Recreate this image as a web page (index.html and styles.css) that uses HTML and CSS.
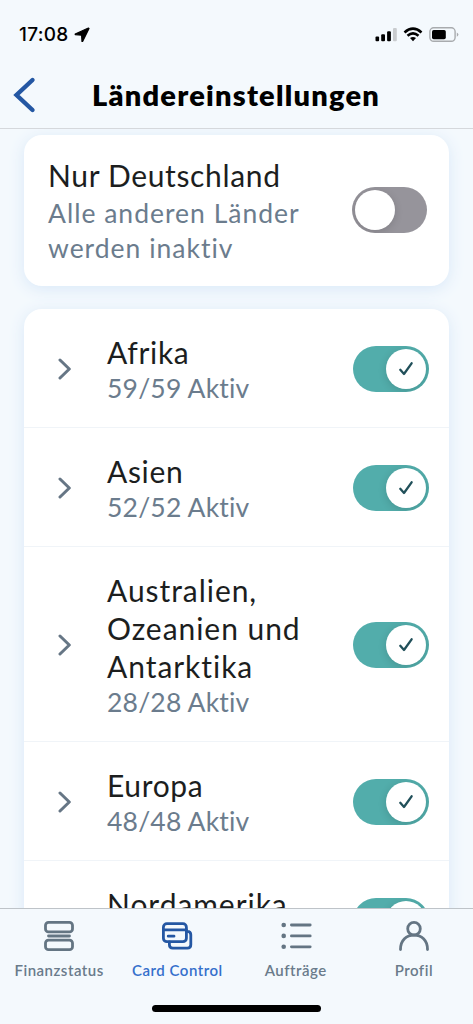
FILE: index.html
```html
<!DOCTYPE html>
<html lang="de">
<head>
<meta charset="utf-8">
<title>Ländereinstellungen</title>
<link rel="stylesheet" href="styles.css">
</head>
<body>
<div class="app">
  <header class="header">
    <div class="status">
      <div class="status-left">
        <span class="time">17:08</span>
        <svg class="loc" width="16" height="16" viewBox="0 0 16 16"><path d="M14.4 1 L1.2 7 L1.2 7.6 L7.6 8.2 L8 14.5 L8.6 14.5 L15 1.4Z" fill="#000" stroke="#000" stroke-width="1.2" stroke-linejoin="round"/></svg>
      </div>
      <svg class="status-icons" width="84" height="18" viewBox="0 0 84 18">
        <rect x=".5" y="10.5" width="3.6" height="4.7" rx="1"/>
        <rect x="6.2" y="8.2" width="3.8" height="7" rx="1"/>
        <rect x="12.1" y="5.2" width="3.8" height="10" rx="1"/>
        <rect x="18" y="2" width="3.8" height="13.2" rx="1" fill="#c9cccf"/>
        <g fill="none" stroke="#000" stroke-width="2.6">
          <path d="M29.5 6.5 Q38 -1.1 46.5 6.5"/>
          <path d="M32.5 9.8 Q38 5 43.5 9.8"/>
        </g>
        <path d="M35 12.1 Q38 9.8 41 12.1 L38 15.3Z"/>
        <rect x="54.9" y="1.8" width="25.2" height="13.5" rx="3.8" fill="none" stroke="#a8abae" stroke-width="1.4"/>
        <rect x="57" y="4" width="13.8" height="9.2" rx="1.7"/>
        <path d="M81.8 6.5 Q83.4 7.3 83.4 8.6 Q83.4 9.9 81.8 10.7Z" fill="#a8abae"/>
      </svg>
    </div>
    <div class="titlebar">
      <svg class="back" width="24" height="38" viewBox="0 0 24 38"><path d="M20.5 4 L4.5 19 L20.5 34" fill="none" stroke="#2457a3" stroke-width="4.4" stroke-linecap="round"/></svg>
      <h1 class="title">Ländereinstellungen</h1>
    </div>
  </header>

  <main class="content">
    <section class="card only">
      <div class="text">
        <div class="name">Nur Deutschland</div>
        <div class="sub note">Alle anderen Länder<br>werden inaktiv</div>
      </div>
      <div class="toggle"><span class="knob"></span></div>
    </section>

    <section class="card list">
      <div class="row">
        <svg class="chev" width="14" height="22" viewBox="0 0 14 22"><path d="M2 2 L11.3 11 L2 20"/></svg>
        <div class="text"><div class="name">Afrika</div><div class="sub">59/59 Aktiv</div></div>
        <div class="toggle on"><span class="knob"><svg width="14" height="14" viewBox="0 0 14 14"><path d="M1.3 7.8 L5 12 L12.6 1.3"/></svg></span></div>
      </div>
      <div class="row">
        <svg class="chev" width="14" height="22" viewBox="0 0 14 22"><path d="M2 2 L11.3 11 L2 20"/></svg>
        <div class="text"><div class="name">Asien</div><div class="sub">52/52 Aktiv</div></div>
        <div class="toggle on"><span class="knob"><svg width="14" height="14" viewBox="0 0 14 14"><path d="M1.3 7.8 L5 12 L12.6 1.3"/></svg></span></div>
      </div>
      <div class="row">
        <svg class="chev" width="14" height="22" viewBox="0 0 14 22"><path d="M2 2 L11.3 11 L2 20"/></svg>
        <div class="text"><div class="name wide">Australien,<br>Ozeanien und<br>Antarktika</div><div class="sub">28/28 Aktiv</div></div>
        <div class="toggle on"><span class="knob"><svg width="14" height="14" viewBox="0 0 14 14"><path d="M1.3 7.8 L5 12 L12.6 1.3"/></svg></span></div>
      </div>
      <div class="row">
        <svg class="chev" width="14" height="22" viewBox="0 0 14 22"><path d="M2 2 L11.3 11 L2 20"/></svg>
        <div class="text"><div class="name">Europa</div><div class="sub">48/48 Aktiv</div></div>
        <div class="toggle on"><span class="knob"><svg width="14" height="14" viewBox="0 0 14 14"><path d="M1.3 7.8 L5 12 L12.6 1.3"/></svg></span></div>
      </div>
      <div class="row last">
        <div class="chev"></div>
        <div class="text"><div class="name wide">Nordamerika</div></div>
        <div class="toggle on"><span class="knob"></span></div>
      </div>
    </section>
  </main>

  <nav class="tabs">
    <div class="tab">
      <svg width="32" height="32" viewBox="0 0 32 32"><rect x="2.5" y="2.3" width="27" height="9.6" rx="3"/><path d="M5.5 16 H26.5"/><rect x="2.5" y="20.1" width="27" height="9.6" rx="3"/></svg>
      <span>Finanzstatus</span>
    </div>
    <div class="tab active">
      <svg width="32" height="32" viewBox="0 0 32 32"><rect x="2.4" y="3.7" width="23" height="18" rx="3.5"/><path d="M2.4 9.8 H25.4 M7.2 16.2 H13 M8.4 22 V24.8 Q8.4 28.2 11.8 28.2 H26.4 Q29.8 28.2 29.8 24.8 V14.8 Q29.8 11.4 26.2 11.4"/></svg>
      <span>Card Control</span>
    </div>
    <div class="tab">
      <svg width="32" height="32" viewBox="0 0 32 32"><path d="M11.4 5 H30.2 M11.4 15.9 H30.2 M11.4 26.8 H30.2"/><g class="dots"><circle cx="3.7" cy="5" r="2.3"/><circle cx="3.7" cy="15.9" r="2.3"/><circle cx="3.7" cy="26.8" r="2.3"/></g></svg>
      <span>Aufträge</span>
    </div>
    <div class="tab">
      <svg width="32" height="32" viewBox="0 0 32 32"><circle cx="16" cy="8.7" r="6.3"/><path d="M2.5 29.5 C2.5 20 8.5 15.2 16 15.2 S29.5 20 29.5 29.5"/></svg>
      <span>Profil</span>
    </div>
  </nav>
  <div class="home"><span class="home-bar"></span></div>
</div>
</body>
</html>
```
FILE: styles.css
```css
* { box-sizing: border-box; }
body { margin: 0; font-family: Lato, sans-serif; font-variant-ligatures: none; }
.app { width: 473px; height: 1024px; display: flex; flex-direction: column; overflow: hidden; background: #f4f9fd; }

.header { height: 129px; flex: none; border-bottom: 1px solid #d5d8dc; }
.status { height: 69px; display: flex; align-items: flex-start; justify-content: space-between; padding: 24px 14px 0 19px; }
.status-left { display: flex; gap: 5px; }
.time { font: 500 19px/22px Inter, sans-serif; letter-spacing: .3px; }
.loc { margin-top: 3px; }
.status-icons { margin-top: 2px; }
.titlebar { height: 50px; display: flex; align-items: center; padding-left: 12px; }
.back { flex: none; margin-top: 1px; }
.title { margin: 1px 0 0 56px; font-size: 29px; line-height: 40px; font-weight: 800; letter-spacing: 1.22px; white-space: nowrap; }

.content { flex: 1; min-height: 0; overflow: hidden; padding: 5.5px 24px 0 24px; display: flex; flex-direction: column; gap: 23.5px; }
.card { flex: none; background: #fff; border-radius: 18px; box-shadow: 0 3px 16px #d9e8f8; }
.only { height: 151px; display: flex; align-items: center; justify-content: space-between; padding: 0 22px 0 24px; }
.name { font-size: 30px; line-height: 38px; color: #1c1e1e; letter-spacing: .65px; white-space: nowrap; }
.name.wide { letter-spacing: .95px; }
.sub { font-size: 26.5px; line-height: 35px; color: #6b7c8d; letter-spacing: .2px; white-space: nowrap; }
.sub.note { margin-top: 2px; letter-spacing: 1px; }
.only .text { margin-top: 1px; }

.row { display: flex; align-items: center; padding: 23.5px 20px 21.5px 34px; border-bottom: 1.5px solid #f0f4f8; }
.row .text { flex: 1; margin-left: 35px; }
.row.last { padding-bottom: 58px; align-items: flex-start; }
.row.last .toggle { margin-top: 13.5px; }
.chev { width: 14px; flex: none; fill: none; stroke: #667685; stroke-width: 3; stroke-linecap: round; stroke-linejoin: round; }

.toggle { width: 75px; height: 46px; flex: none; border-radius: 23px; background: #96949b; display: flex; align-items: center; padding: 0 3px; overflow: hidden; }
.toggle.on { width: 76px; background: #52adab; justify-content: flex-end; }
.knob { width: 40px; height: 40px; border-radius: 50%; background: #fff; display: flex; align-items: center; justify-content: center; box-shadow: 0 2px 8px rgba(0,0,0,.14); }
.knob svg { fill: none; stroke: #21505a; stroke-width: 2.3; stroke-linecap: round; stroke-linejoin: round; }

.tabs { height: 80px; flex: none; border-top: 1px solid #bec3c8; display: grid; grid-template-columns: repeat(4, 1fr); padding-top: 11px; background: #f4f9fd; z-index: 1; }
.tab { display: flex; flex-direction: column; align-items: center; gap: 8px; color: #6a7b8b; font-size: 15px; line-height: 20px; font-weight: 600; letter-spacing: .5px; white-space: nowrap; }
.tab svg { fill: none; stroke: #647583; stroke-width: 2.8; stroke-linecap: round; stroke-linejoin: round; }
.tab .dots { fill: #647583; stroke: none; }
.tab.active { color: #3570cc; }
.tab.active svg { stroke: #2457a3; }
.home { height: 36px; flex: none; display: flex; justify-content: center; padding-top: 16.5px; background: #f4f9fd; }
.home-bar { width: 169px; height: 7.5px; border-radius: 4px; background: #000; }
```
